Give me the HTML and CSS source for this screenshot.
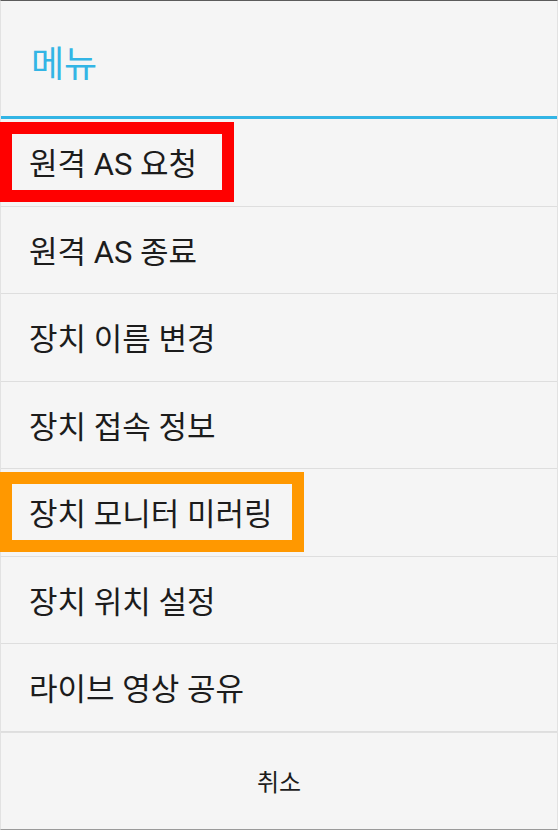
FILE: index.html
```html
<!DOCTYPE html>
<html lang="ko">
<head>
<meta charset="utf-8">
<title>메뉴</title>
<link rel="stylesheet" href="styles.css">
</head>
<body>
<div class="dialog">
  <div class="header"><span class="title">메뉴</span></div>
  <div class="accent"></div>
  <ul class="menu">
    <li class="item item-boxed"><span class="box box-red">원격 AS 요청</span></li>
    <li class="item">원격 AS 종료</li>
    <li class="item">장치 이름 변경</li>
    <li class="item">장치 접속 정보</li>
    <li class="item item-boxed"><span class="box box-orange">장치 모니터 미러링</span></li>
    <li class="item">장치 위치 설정</li>
    <li class="item">라이브 영상 공유</li>
  </ul>
  <div class="cancel">취소</div>
</div>
</body>
</html>
```
FILE: styles.css
```css
* { box-sizing: border-box; }
html, body { margin: 0; padding: 0; }
body {
  width: 558px;
  height: 830px;
  background: #f5f5f5;
  font-family: Roboto, "Noto Sans CJK KR", sans-serif;
  color: #1c1c1c;
}
.dialog {
  width: 558px;
  height: 830px;
  display: flex;
  flex-direction: column;
  background: #f5f5f5;
  border-top: 1px solid #5c5c5c;
  border-left: 1px solid #e2e2e2;
  border-right: 1px solid #e2e2e2;
  border-bottom: 1px solid #9a9a9a;
}
.header {
  height: 115px;
  display: flex;
  align-items: center;
  padding-left: 30px;
  padding-top: 4px;
}
.title {
  font-family: "Noto Sans CJK KR", sans-serif;
  font-size: 36px;
  color: #33b5e5;
}
.accent {
  height: 3px;
  background: #33b5e5;
}
.menu {
  list-style: none;
  margin: 0;
  padding: 0;
}
.item {
  height: 87.5px;
  border-bottom: 1px solid #dedede;
  display: flex;
  align-items: center;
  padding-left: 28px;
  font-size: 31px;
  padding-bottom: 1px;
  white-space: nowrap;
}
.item-boxed {
  padding-left: 0;
  margin-left: -1px;
}
.box {
  display: flex;
  align-items: center;
  height: 80px;
  border: 12px solid;
  padding-left: 17px;
}
.box-red {
  border-color: #ff0000;
  width: 234px;
}
.box-orange {
  border-color: #ff9800;
  width: 304px;
}
.cancel {
  flex: 1;
  border-top: 1px solid #e0e0e0;
  display: flex;
  align-items: center;
  justify-content: center;
  font-family: "Noto Sans CJK KR", sans-serif;
  font-size: 24px;
}
```
